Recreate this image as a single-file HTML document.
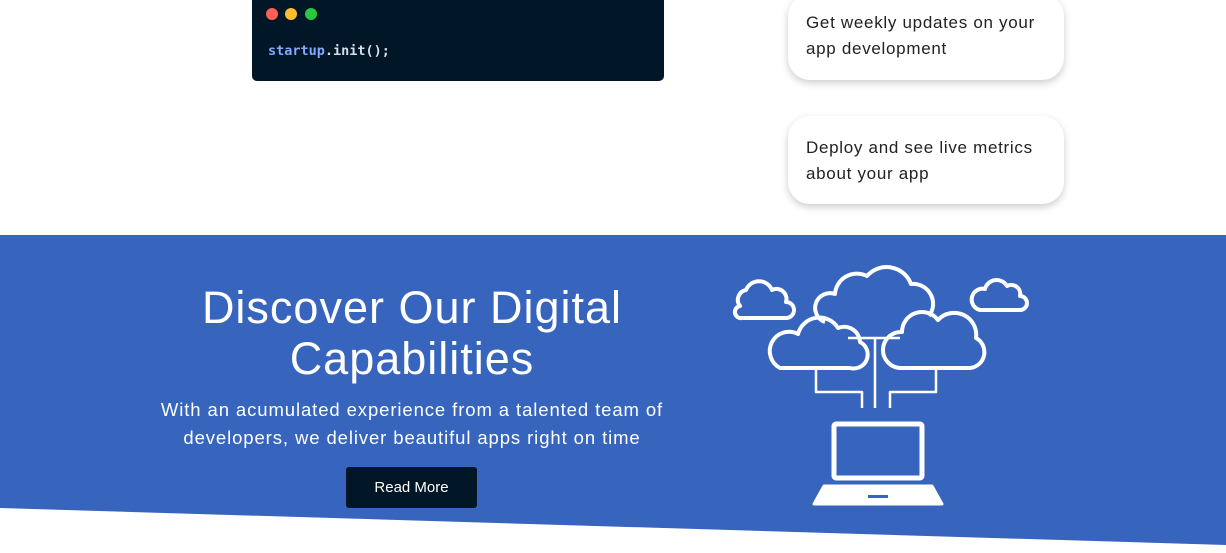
<!DOCTYPE html>
<html><head><meta charset="utf-8"><style>
*{margin:0;padding:0;box-sizing:border-box}
body{width:1226px;height:553px;background:#fff;position:relative;overflow:hidden;font-family:"Liberation Sans",sans-serif}
.code{position:absolute;left:252px;top:-10px;width:412px;height:91px;background:#011627;border-radius:0 0 5px 5px}
.dot{position:absolute;top:18px;width:12px;height:12px;border-radius:50%}
.code pre{position:absolute;left:16px;top:53px;font-family:"DejaVu Sans Mono","Liberation Mono",monospace;font-size:13.5px;color:#d6deeb;font-weight:bold}
.card{position:absolute;left:788px;width:276px;background:#fff;border-radius:22px;box-shadow:0 3px 8px rgba(0,0,0,.2);padding:19px 18px;font-size:17px;line-height:26px;color:#222;letter-spacing:.7px}
.blue{position:absolute;left:0;top:235px;width:1226px;height:318px;background:#3764bd;clip-path:polygon(0 0,100% 0,100% 310px,0 273px)}
h2{position:absolute;left:100px;width:624px;top:282px;text-align:center;color:#fff;font-weight:normal;font-size:45px;line-height:51px;letter-spacing:1px}
p.sub{position:absolute;left:150px;width:524px;top:396px;text-align:center;color:#fff;font-size:18.5px;line-height:28px;letter-spacing:.9px}
.btn{position:absolute;left:346px;top:467px;width:131px;height:41px;background:#011627;color:#fff;border-radius:3px;font-size:15px;text-align:center;line-height:41px}
</style></head><body>
<div class="code">
<div class="dot" style="left:14px;background:#ff5f56"></div>
<div class="dot" style="left:33px;background:#ffbd2e"></div>
<div class="dot" style="left:53px;background:#27c93f"></div>
<pre><span style="color:#82aaff">startup</span>.init();</pre>
</div>
<div class="card" style="top:-6px;padding-top:16px;padding-bottom:18px">Get weekly updates on your app development</div>
<div class="card" style="top:116px;padding-bottom:17px">Deploy and see live metrics about your app</div>
<div class="blue"></div>
<h2>Discover Our Digital Capabilities</h2>
<p class="sub">With an acumulated experience from a talented team of developers, we deliver beautiful apps right on time</p>
<div class="btn">Read More</div>
<svg style="position:absolute;left:720px;top:260px" width="320" height="260" viewBox="0 0 320 260" fill="none" stroke="#fff" stroke-width="4" stroke-linejoin="round">
<path d="M22 58 h44 a8 8 0 0 0 0-16 a10 10 0 0 0-14-12 a14 14 0 0 0-26 0 a10 10 0 0 0-6 16 a6 6 0 0 0 2 12z"/>
<path d="M260 50 h40 a7 7 0 0 0 0-14 a9 9 0 0 0-13-10 a12 12 0 0 0-22 3 a9 9 0 0 0-5 21z"/>
<path d="M105 62 a14 14 0 0 1 10-28 a22 22 0 0 1 32-18 a26 26 0 0 1 44 8 a20 20 0 0 1 18 32"/>
<path d="M60 108 h70 a14 14 0 0 0 10-26 a16 16 0 0 0-22-14 a22 22 0 0 0-40 6 a18 18 0 0 0-18 34z"/>
<path d="M180 108 h70 a16 16 0 0 0 6-30 a22 22 0 0 0-38-18 a20 20 0 0 0-36 12 a18 18 0 0 0-2 36z"/>
<path d="M128 78 h52 M155 78 v70 M96 110 v22 h46 v16 M216 110 v22 h-46 v16" stroke-width="2.5"/>
<rect x="114" y="164" width="88" height="54" rx="2" stroke-width="5"/>
<path d="M104 226 h108 l10 18 h-128z" fill="#fff" stroke-width="3"/>
<rect x="148" y="235" width="20" height="3" fill="#3764bd" stroke="none"/>
</svg>
</body></html>
